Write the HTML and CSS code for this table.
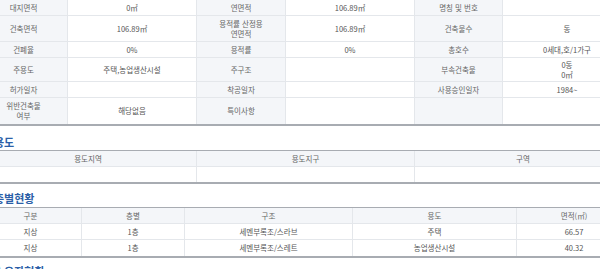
FILE: index.html
```html
<!DOCTYPE html>
<html lang="ko">
<head>
<meta charset="utf-8">
<title>건축물대장</title>
<link rel="stylesheet" href="styles.css">
</head>
<body>
<div class="page">
  <div class="info">
    <div class="lbl">대지면적</div><div class="val">0㎡</div>
    <div class="lbl">연면적</div><div class="val">106.89㎡</div>
    <div class="lbl">명칭 및 번호</div><div class="val"></div>

    <div class="lbl">건축면적</div><div class="val">106.89㎡</div>
    <div class="lbl">용적률 산정용<br>연면적</div><div class="val">106.89㎡</div>
    <div class="lbl">건축물수</div><div class="val">동</div>

    <div class="lbl">건폐율</div><div class="val">0%</div>
    <div class="lbl">용적률</div><div class="val">0%</div>
    <div class="lbl">총호수</div><div class="val">0세대,호/1가구</div>

    <div class="lbl">주용도</div><div class="val">주택,농업생산시설</div>
    <div class="lbl">주구조</div><div class="val"></div>
    <div class="lbl">부속건축물</div><div class="val">0동<br>0㎡</div>

    <div class="lbl">허가일자</div><div class="val"></div>
    <div class="lbl">착공일자</div><div class="val"></div>
    <div class="lbl">사용승인일자</div><div class="val">1984~</div>

    <div class="lbl">위반건축물<br>여부</div><div class="val">해당없음</div>
    <div class="lbl">특이사항</div><div class="val"></div>
    <div class="lbl"></div><div class="val"></div>
  </div>

  <h3 class="sec">용도</h3>
  <div class="zone">
    <div class="th">용도지역</div><div class="th">용도지구</div><div class="th">구역</div>
    <div class="td"></div><div class="td"></div><div class="td"></div>
  </div>

  <h3 class="sec sec2">층별현황</h3>
  <div class="floors">
    <div class="th">구분</div><div class="th">층별</div><div class="th">구조</div><div class="th">용도</div><div class="th">면적(㎡)</div>
    <div class="td">지상</div><div class="td">1층</div><div class="td">세멘부록조/스라브</div><div class="td">주택</div><div class="td">66.57</div>
    <div class="td">지상</div><div class="td">1층</div><div class="td">세멘부록조/스레트</div><div class="td">농업생산시설</div><div class="td">40.32</div>
  </div>

  <h3 class="sec sec3">소유자현황</h3>
</div>
</body>
</html>
```

FILE: styles.css
```css
* { box-sizing: border-box; }

body {
  margin: 0;
  background: #fff;
  overflow: hidden;
  font-family: "Noto Sans CJK KR", "Noto Sans", sans-serif;
  color: #555;
}

.page {
  margin-left: -20px;
  width: 652px;
}

.info {
  display: grid;
  grid-template-columns: 88px 129px 89px 129px 88px 129px;
  grid-template-rows: 16px 26px 16px 24px 16px 26px;
  border-bottom: 2px solid #a8acb2;
}

.info > div,
.zone > div,
.floors > div {
  display: flex;
  align-items: center;
  justify-content: center;
  text-align: center;
  font-size: 7.5px;
  line-height: 10px;
  border-bottom: 1px solid #e4e7eb;
  border-right: 1px solid #e4e7eb;
}

.info > div:nth-last-child(-n+6) { border-bottom: 0; }

.lbl {
  background: #f4f6f9;
  color: #666;
}

.val { color: #555; }

.sec {
  margin: 9px 0 1px 14px;
  font-size: 11px;
  line-height: 14px;
  font-weight: bold;
  color: #2c5fa8;
}

.sec2 { margin-top: 7px; margin-bottom: 2px; }
.sec3 { margin-top: 6px; }

.zone {
  display: grid;
  grid-template-columns: 217px 218px 217px;
  grid-template-rows: 16px 15px;
  border-top: 1px solid #a8acb2;
  border-bottom: 2px solid #a8acb2;
}

.zone > .td:nth-last-child(-n+3) { border-bottom: 0; }

.th {
  background: #f4f6f9;
  color: #666;
}

.floors {
  display: grid;
  grid-template-columns: 102px 103px 168px 164px 115px;
  grid-template-rows: 16px 16px 16px;
  border-top: 1px solid #a8acb2;
  border-bottom: 2px solid #a8acb2;
}

.floors > .td:nth-last-child(-n+5) { border-bottom: 0; }
```
